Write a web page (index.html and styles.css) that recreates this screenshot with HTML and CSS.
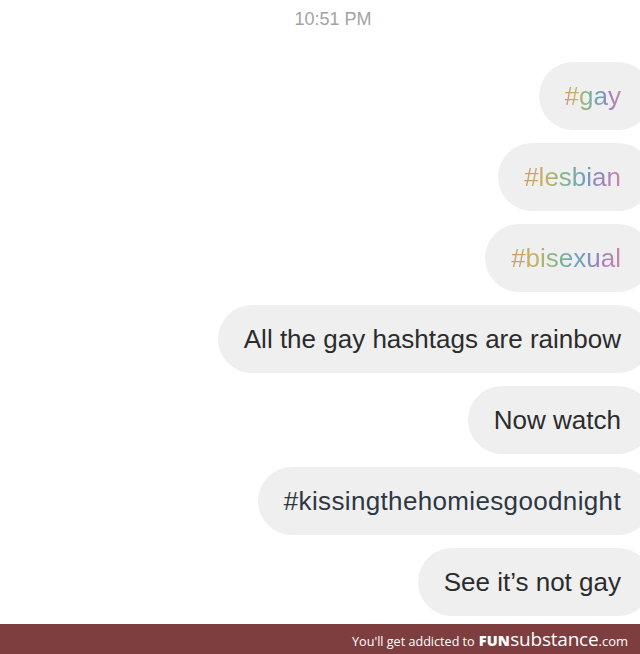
FILE: index.html
```html
<!DOCTYPE html>
<html>
<head>
<meta charset="utf-8">
<link rel="stylesheet" href="styles.css">
</head>
<body>
<div class="screen">
  <div class="time">10:51 PM</div>
  <div class="thread">
    <div class="bubble"><span class="rainbow">#gay</span></div>
    <div class="bubble"><span class="rainbow">#lesbian</span></div>
    <div class="bubble"><span class="rainbow">#bisexual</span></div>
    <div class="bubble">All the gay hashtags are rainbow</div>
    <div class="bubble">Now watch</div>
    <div class="bubble tag">#kissingthehomiesgoodnight</div>
    <div class="bubble">See it’s not gay</div>
  </div>
</div>
<div class="footer">
  <span class="promo">You'll get addicted to</span>
  <span class="brand"><span class="fun">FUN</span><span class="sub">substance</span><span class="com">.com</span></span>
</div>
</body>
</html>
```
FILE: styles.css
```css
html, body {
  margin: 0;
  padding: 0;
  overflow: hidden;
  background: #ffffff;
}
.screen {
  height: 624px;
  display: flex;
  flex-direction: column;
}
.time {
  height: 38px;
  line-height: 39px;
  padding-left: 26px;
  text-align: center;
  font-family: "Liberation Sans", Arial, sans-serif;
  font-size: 18px;
  color: #a3a3a3;
  margin-bottom: 24px;
}
.thread {
  display: flex;
  flex-direction: column;
  align-items: flex-end;
  gap: 13px;
}
.bubble {
  height: 68px;
  display: flex;
  align-items: center;
  padding: 0 31px 0 26px;
  margin-right: -12px;
  border-radius: 34px;
  background: #efeff0;
  font-family: "Liberation Sans", Arial, sans-serif;
  font-size: 26px;
  color: #2c2c2c;
  white-space: nowrap;
}
.bubble.tag {
  color: #2e3742;
  letter-spacing: 0.35px;
}
.rainbow {
  background: linear-gradient(90deg, #cf9868 0%, #c4b464 22%, #7fb48b 42%, #6fa0c0 62%, #9a80c0 80%, #c98aa6 100%);
  -webkit-background-clip: text;
  background-clip: text;
  color: transparent;
}
.footer {
  height: 30px;
  background: #7e3d3e;
  display: flex;
  justify-content: flex-end;
  align-items: baseline;
  padding-right: 12px;
  gap: 4px;
  line-height: 30px;
  color: #ffffff;
  font-family: "Open Sans", "Liberation Sans", sans-serif;
}
.promo {
  font-size: 12.6px;
}
.brand {
  display: inline-flex;
  align-items: baseline;
}
.fun {
  font-weight: 800;
  font-size: 14.5px;
  letter-spacing: 0.2px;
}
.sub {
  font-size: 19px;
  letter-spacing: -0.2px;
}
.com {
  font-size: 13px;
}
```
